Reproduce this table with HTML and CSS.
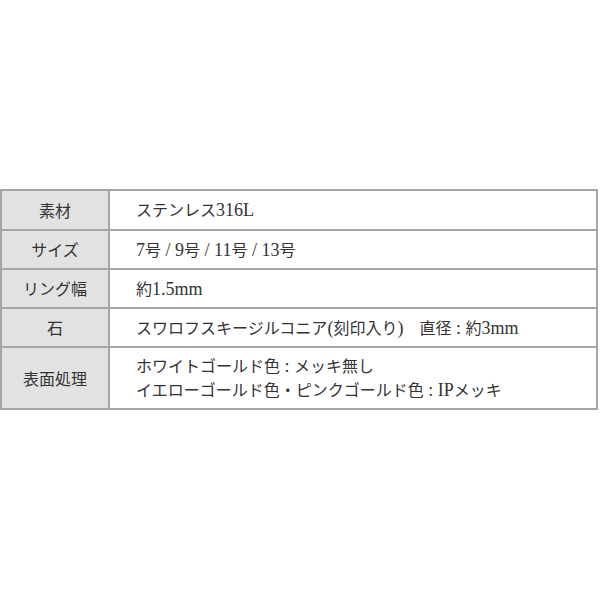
FILE: index.html
```html
<!DOCTYPE html>
<html lang="ja">
<head>
<meta charset="utf-8">
<link rel="stylesheet" href="styles.css">
</head>
<body>
<div class="spec">
  <div class="lbl">素材</div>
  <div class="val"><p>ステンレス<span class="lat">316L</span></p></div>
  <div class="lbl">サイズ</div>
  <div class="val"><p><span class="lat">7</span>号<span class="lat"> / 9</span>号<span class="lat"> / 11</span>号<span class="lat"> / 13</span>号</p></div>
  <div class="lbl">リング幅</div>
  <div class="val"><p>約<span class="lat">1.5mm</span></p></div>
  <div class="lbl">石</div>
  <div class="val"><p>スワロフスキージルコニア<span class="lat">(</span>刻印入り<span class="lat">)</span>　直径<span class="lat"> : </span>約<span class="lat">3mm</span></p></div>
  <div class="lbl">表面処理</div>
  <div class="val"><p>ホワイトゴールド色<span class="lat"> : </span>メッキ無し</p><p>イエローゴールド色・ピンクゴールド色<span class="lat"> : IP</span>メッキ</p></div>
</div>
</body>
</html>
```
FILE: styles.css
```css
html, body {
  margin: 0;
  padding: 0;
  background: #ffffff;
}
body {
  padding-top: 189px;
}
.spec {
  display: grid;
  grid-template-columns: 106px 486px;
  grid-template-rows: 38px 37px 37px 37px 60px;
  gap: 2px;
  padding: 2px;
  width: max-content;
  background: #a5a5a5;
  color: #333333;
}
.lbl {
  background: #e2e2e2;
  display: flex;
  align-items: center;
  justify-content: center;
  font-family: "Noto Sans CJK JP", sans-serif;
  font-size: 16px;
  line-height: 23px;
}
.val {
  background: #ffffff;
  display: flex;
  flex-direction: column;
  justify-content: center;
  padding-left: 26px;
  font-family: "Noto Sans CJK JP", sans-serif;
  font-size: 16px;
  line-height: 23px;
}
.val p {
  margin: 0;
  white-space: pre;
}
.lat {
  font-family: "Liberation Serif", serif;
  font-size: 18px;
}
```
